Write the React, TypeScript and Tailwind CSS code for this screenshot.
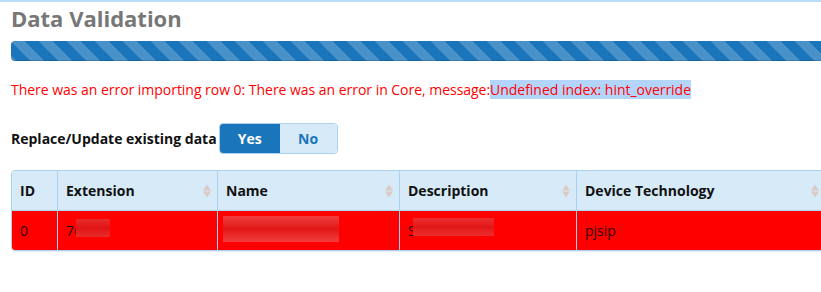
import React from "react";

const SortIcon = () => (
  <svg width="8" height="13" viewBox="0 0 8 13" className="absolute right-[6px] top-1/2 -translate-y-1/2">
    <polygon points="4,0 8,6 0,6" fill="#dccbc5" />
    <polygon points="0,7 8,7 4,13" fill="#dccbc5" />
  </svg>
);

const Th = ({ w, children, sort = true, last = false }: { w: string; children: React.ReactNode; sort?: boolean; last?: boolean }) => (
  <div className={`relative flex h-full items-center pl-[8px] font-bold text-[14px] text-[#111] ${w} ${last ? "" : "border-r border-[#a9d2f0]"}`}>
    {children}
    {sort && <SortIcon />}
  </div>
);

const Td = ({ w, children, last = false }: { w: string; children?: React.ReactNode; last?: boolean }) => (
  <div className={`relative flex h-full items-center pl-[8px] text-[14px] text-[#2a0000] ${w} ${last ? "" : "border-r border-[#a9d2f0]"}`}>
    {children}
  </div>
);

export default function App() {
  return (
    <div className="w-[821px] h-[292px] overflow-hidden bg-white" style={{ fontFamily: '"Open Sans", "Noto Sans", sans-serif' }}>
      <div className="border-t-2 border-[#bcdcf6]" />
      <div className="w-[826px] pl-[11px]">
        <h2 className="mt-[1px] text-[22px] leading-[30px] font-bold text-[#777777]">Data Validation</h2>
        <div className="mt-[8px] h-[20px] rounded-l-[4px] bg-[#1b75bb] shadow-[inset_0_-1px_0_rgba(0,0,0,0.15)]"
          style={{
            backgroundImage:
              "linear-gradient(45deg, rgba(255,255,255,0.2) 25%, transparent 25%, transparent 50%, rgba(255,255,255,0.2) 50%, rgba(255,255,255,0.2) 75%, transparent 75%, transparent)",
            backgroundSize: "28px 28px",
          }}
        />
        <p className="mt-[19px] text-[14px] leading-[20px] tracking-[-0.03px] text-[#ff0000]">
          There was an error importing row 0: There was an error in Core, message:<span className="bg-[#b4d5fb]">Undefined index: hint_override</span>
        </p>
        <div className="mt-[23px] flex items-center gap-[2px]">
          <span className="text-[14px] font-bold text-[#111]">Replace/Update existing data</span>
          <div className="flex h-[31px] rounded-[4px] border border-[#a9d2f0] overflow-hidden">
            <div className="flex w-[60px] items-center justify-center bg-[#1b75bb] text-[14px] font-bold text-white">Yes</div>
            <div className="flex w-[57px] items-center justify-center bg-[#d6eaf8] text-[14px] font-bold text-[#1b75bb]">No</div>
          </div>
        </div>
        <div className="mt-[16px] rounded-[4px] border border-[#a9d2f0] overflow-hidden shadow-[0_1px_1px_rgba(0,0,0,0.08)]">
          <div className="flex h-[40px] bg-[#d6eaf8] border-b border-[#a9d2f0]">
            <Th w="w-[46px]" sort={false}>ID</Th>
            <Th w="w-[160px]">Extension</Th>
            <Th w="w-[182px]">Name</Th>
            <Th w="w-[177px]">Description</Th>
            <Th w="flex-1" last>Device Technology</Th>
          </div>
          <div className="flex h-[39px] bg-[#ff0000]">
            <Td w="w-[46px]">0</Td>
            <Td w="w-[160px]">
              76
              <div className="absolute left-[18px] top-[8px] h-[18px] w-[34px] bg-gradient-to-b from-[#ea2a2a] via-[#e01414] to-[#ea2a2a]" />
            </Td>
            <Td w="w-[182px]">
              <div className="absolute left-[5px] top-[5px] h-[26px] w-[116px] bg-gradient-to-b from-[#f03c3c] via-[#e11414] to-[#f03c3c]" />
            </Td>
            <Td w="w-[177px]">
              S
              <div className="absolute left-[13px] top-[7px] h-[18px] w-[81px] bg-gradient-to-b from-[#ec2e2e] via-[#e21616] to-[#ec2e2e]" />
            </Td>
            <Td w="flex-1" last>pjsip</Td>
          </div>
        </div>
      </div>
    </div>
  );
}
